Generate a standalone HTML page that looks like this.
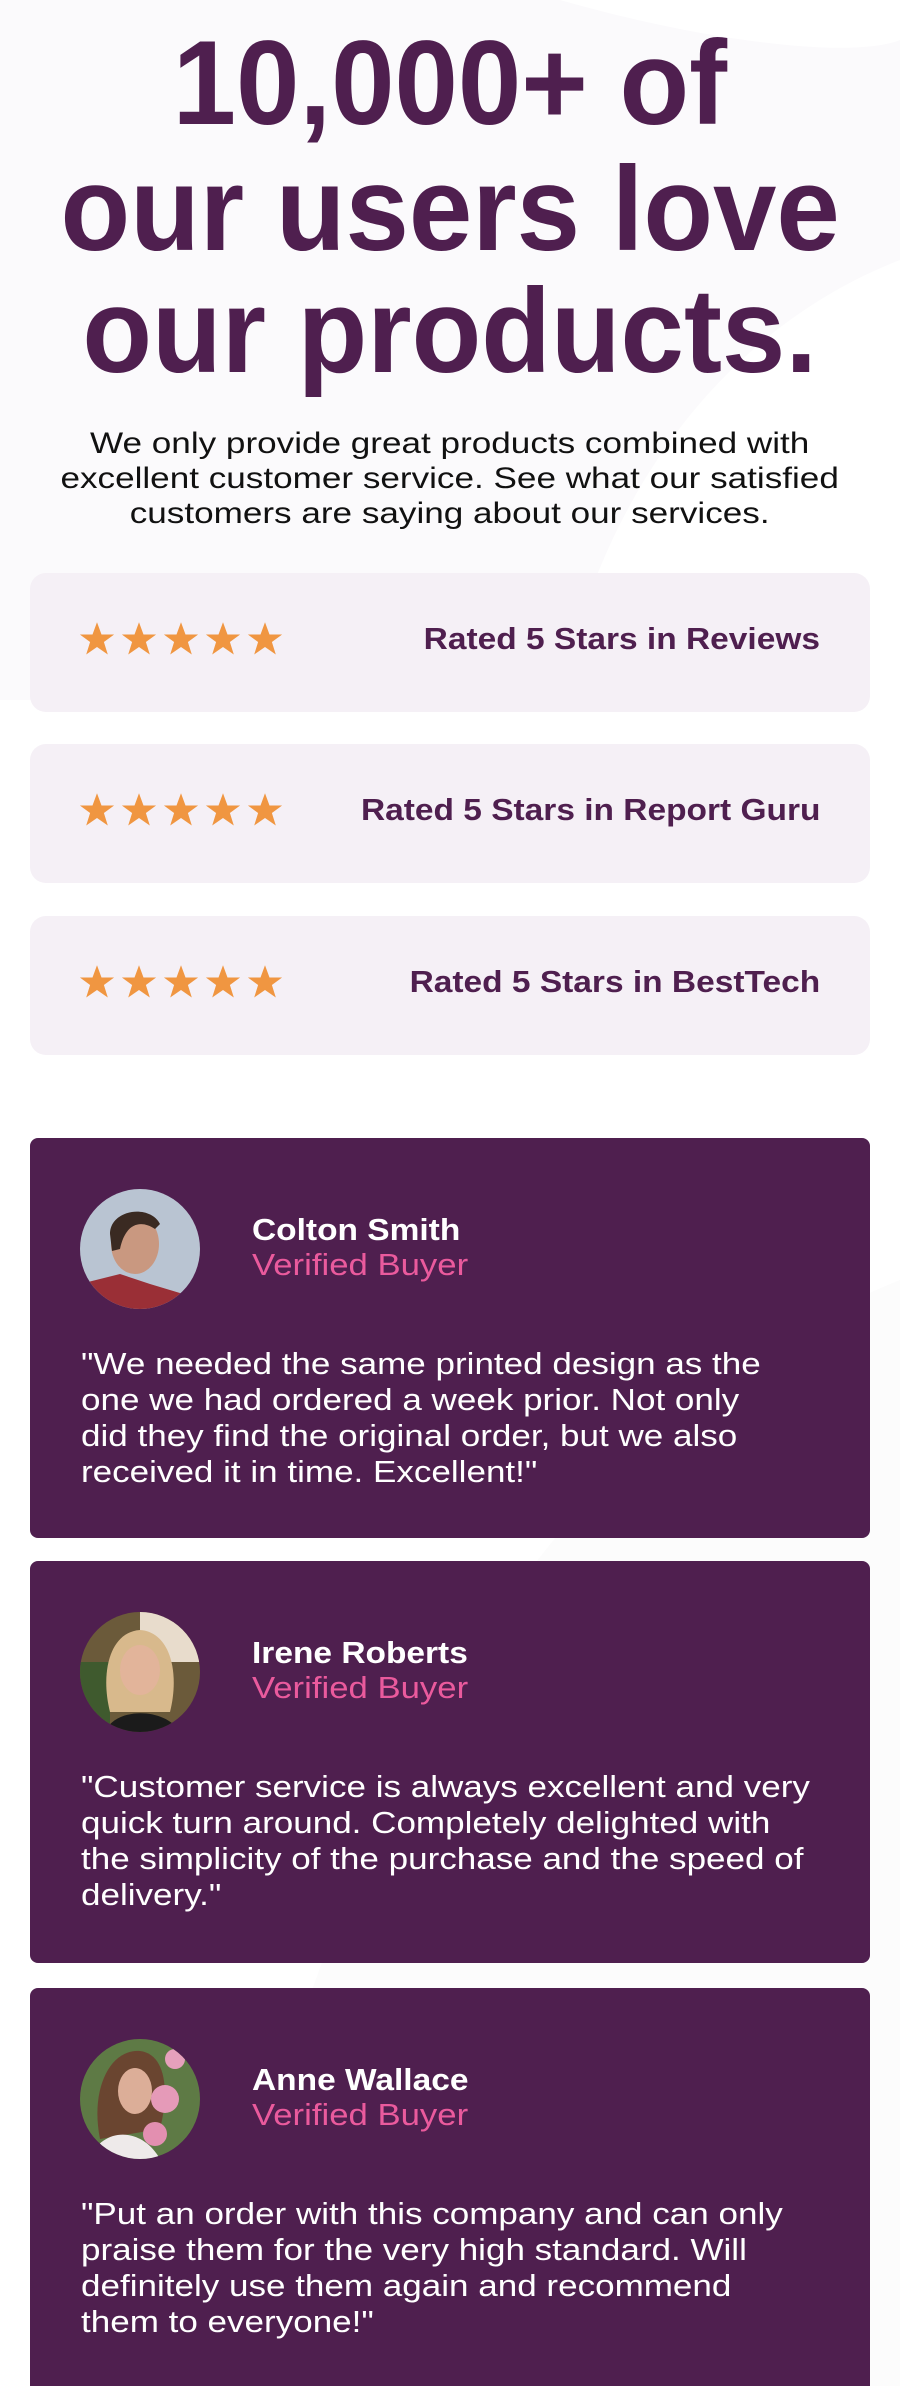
<!DOCTYPE html>
<html><head><meta charset="utf-8"><style>
*{margin:0;padding:0;box-sizing:border-box}
body{width:900px;height:2386px;position:relative;overflow:hidden;background:#fff;font-family:"Liberation Sans",sans-serif}
.bg{position:absolute;left:0;top:0}
.h{position:absolute;left:0;width:900px;text-align:center;color:#4f1f4f;font-weight:bold;font-size:120px;line-height:1;white-space:nowrap}
.h span{display:inline-block;transform:scaleX(0.95);transform-origin:center}
.sub{position:absolute;left:0;width:900px;text-align:center;color:#111;font-size:30px;line-height:35px;top:426px;white-space:nowrap}
.sub span{display:inline-block;transform:scaleX(1.17)}
.rc{position:absolute;left:30px;width:840px;height:139px;background:#f5f0f6;border-radius:16px}
.stars{position:absolute;left:49px;top:47px}
.rt{position:absolute;right:50px;top:48px;color:#4f1f4f;font-weight:bold;font-size:31px;white-space:nowrap;transform:scaleX(1.08);transform-origin:right}
.tc{position:absolute;left:30px;width:840px;height:400px;background:#4f1f4f;border-radius:8px;color:#fff}
.av{position:absolute;left:50px;top:51px;width:120px;height:120px;border-radius:50%;overflow:hidden}
.nm{position:absolute;left:222px;top:74px;font-weight:bold;font-size:31px;white-space:nowrap;transform:scaleX(1.08);transform-origin:left}
.vb{position:absolute;left:222px;top:109px;font-size:31px;color:#ea5a9d;white-space:nowrap;transform:scaleX(1.12);transform-origin:left}
.q{position:absolute;left:51px;top:208px;width:760px;font-size:31px;line-height:36px;transform:scaleX(1.13);transform-origin:left}
.q div{white-space:nowrap}
</style></head><body>
<svg class="bg" width="900" height="2386"><path d="M560 0 C700 40 850 60 900 40 L900 260 C720 330 600 500 560 700 L0 700 L0 0 Z" fill="#fbfafc"/><path d="M900 1280 C600 1400 350 1700 200 2386 L900 2386Z" fill="#fcfcfc"/></svg>
<div class="h" style="top:23px"><span>10,000+ of</span></div>
<div class="h" style="top:149px"><span>our users love</span></div>
<div class="h" style="top:271px"><span>our products.</span></div>
<div class="sub"><span>We only provide great products combined with<br>excellent customer service. See what our satisfied<br>customers are saying about our services.</span></div>

<svg width="0" height="0" style="position:absolute"><defs><symbol id="st" viewBox="0 0 24 24"><path d="M12 1.5l3 8.2h8.4l-6.8 5 2.6 8.3L12 18l-7.2 5 2.6-8.3-6.8-5H9z" fill="#f09641"/></symbol></defs></svg>

<div class="rc" style="top:573px"><svg class="stars" width="210" height="40"><use href="#st" x="0" y="0" width="36" height="36"/><use href="#st" x="42" y="0" width="36" height="36"/><use href="#st" x="84" y="0" width="36" height="36"/><use href="#st" x="126" y="0" width="36" height="36"/><use href="#st" x="168" y="0" width="36" height="36"/></svg><div class="rt">Rated 5 Stars in Reviews</div></div>
<div class="rc" style="top:744px"><svg class="stars" width="210" height="40"><use href="#st" x="0" y="0" width="36" height="36"/><use href="#st" x="42" y="0" width="36" height="36"/><use href="#st" x="84" y="0" width="36" height="36"/><use href="#st" x="126" y="0" width="36" height="36"/><use href="#st" x="168" y="0" width="36" height="36"/></svg><div class="rt">Rated 5 Stars in Report Guru</div></div>
<div class="rc" style="top:916px"><svg class="stars" width="210" height="40"><use href="#st" x="0" y="0" width="36" height="36"/><use href="#st" x="42" y="0" width="36" height="36"/><use href="#st" x="84" y="0" width="36" height="36"/><use href="#st" x="126" y="0" width="36" height="36"/><use href="#st" x="168" y="0" width="36" height="36"/></svg><div class="rt">Rated 5 Stars in BestTech</div></div>

<div class="tc" style="top:1138px">
<svg class="av" viewBox="0 0 120 120"><rect width="120" height="120" fill="#b9c4d2"/><path d="M0 95 L40 85 L70 95 L120 110 L120 120 L0 120Z" fill="#9a2f36"/><ellipse cx="55" cy="55" rx="24" ry="30" fill="#c99880"/><path d="M30 45 C30 20 70 15 80 35 L75 40 C60 30 45 35 40 60 L32 62Z" fill="#3a2a22"/></svg>
<div class="nm">Colton Smith</div><div class="vb">Verified Buyer</div>
<div class="q"><div>"We needed the same printed design as the</div><div>one we had ordered a week prior. Not only</div><div>did they find the original order, but we also</div><div>received it in time. Excellent!"</div></div></div>

<div class="tc" style="top:1561px;height:402px">
<svg class="av" viewBox="0 0 120 120"><rect width="120" height="120" fill="#6b5a3a"/><rect x="60" width="60" height="50" fill="#e8dccc"/><rect x="0" y="50" width="30" height="70" fill="#3f5a2e"/><path d="M30 100 C20 60 30 20 60 18 C90 20 100 60 90 100Z" fill="#d8b98c"/><ellipse cx="60" cy="58" rx="20" ry="25" fill="#e2b49a"/><path d="M25 120 C35 95 85 95 100 120Z" fill="#1b1b1b"/></svg>
<div class="nm">Irene Roberts</div><div class="vb">Verified Buyer</div>
<div class="q"><div>"Customer service is always excellent and very</div><div>quick turn around. Completely delighted with</div><div>the simplicity of the purchase and the speed of</div><div>delivery."</div></div></div>

<div class="tc" style="top:1988px;height:398px;border-radius:8px 8px 0 0">
<svg class="av" viewBox="0 0 120 120"><rect width="120" height="120" fill="#5e7a45"/><path d="M20 100 C10 50 30 10 60 12 C85 15 90 50 80 90Z" fill="#6a4530"/><ellipse cx="55" cy="52" rx="17" ry="23" fill="#dcae98"/><path d="M10 120 C20 90 60 85 80 120Z" fill="#eeeaea"/><circle cx="85" cy="60" r="14" fill="#e59ab8"/><circle cx="75" cy="95" r="12" fill="#e38fb0"/><circle cx="95" cy="20" r="10" fill="#e6a0bc"/></svg>
<div class="nm">Anne Wallace</div><div class="vb">Verified Buyer</div>
<div class="q"><div>"Put an order with this company and can only</div><div>praise them for the very high standard. Will</div><div>definitely use them again and recommend</div><div>them to everyone!"</div></div></div>
</body></html>
